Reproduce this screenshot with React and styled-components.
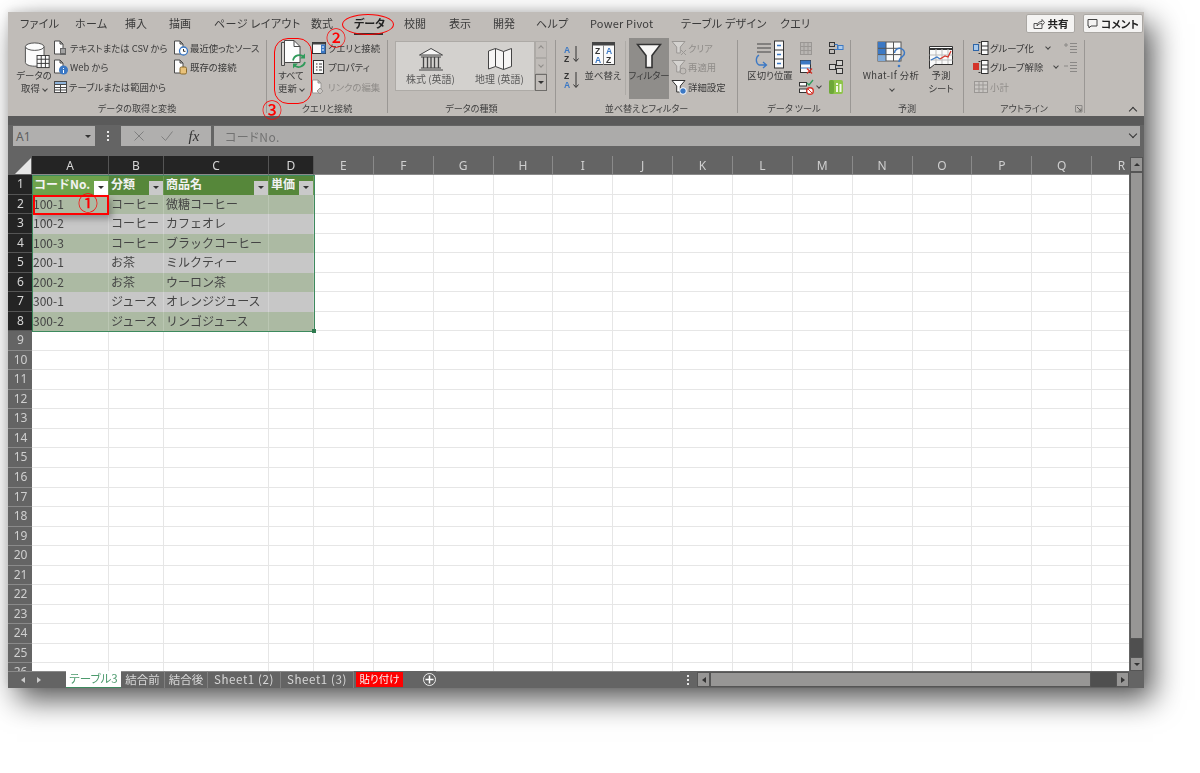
import React from "react";
import styled, { createGlobalStyle } from "styled-components";

const Global = createGlobalStyle`
  html, body { margin: 0; padding: 0; background: #fff; }
  #root { width: 1200px; height: 773px; overflow: hidden; }
  * { box-sizing: border-box; }
`;
const Page = styled.div`
  padding: 12px 0 0 8px;
  font-family: "Noto Sans CJK JP", "Noto Sans", sans-serif;
  font-feature-settings: "palt";
`;
const Win = styled.div`
  position: relative;
  width: 1136px;
  height: 676px;
  background: #c0bcb8;
  box-shadow: 9px 12px 28px rgba(0, 0, 0, 0.66), 0 -2px 8px rgba(0, 0, 0, 0.1);
  filter: blur(0.4px);
`;
const TabRow = styled.div`
  height: 23px;
  display: flex;
  align-items: center;
  padding-left: 12px;
  position: relative;
`;
const MenuTab = styled.div`
  width: ${(p) => p.$w}px;
  font-size: 11px;
  line-height: 23px;
  white-space: nowrap;
  color: ${(p) => (p.$on ? "#222" : "#3a3a3a")};
  font-weight: ${(p) => (p.$on ? 700 : 400)};
  letter-spacing: ${(p) => p.$ls || 0}px;
`;
const OnBar = styled.div`
  position: absolute;
  left: 346px;
  top: 21px;
  width: 29px;
  height: 2px;
  background: #333;
`;
const TabActions = styled.div`
  margin-left: auto;
  display: flex;
  gap: 8px;
  padding-right: 1px;
`;
const ActionBtn = styled.div`
  width: ${(p) => p.$w}px;
  height: 19px;
  background: #f4f3f2;
  border: 1px solid #aaa7a3;
  border-radius: 2px;
  display: flex;
  align-items: center;
  justify-content: center;
  gap: 3px;
  font-size: 10.5px;
  font-weight: 700;
  color: #222;
`;
const Ribbon = styled.div`
  height: 81px;
  display: flex;
  position: relative;
`;
const Group = styled.div`
  width: ${(p) => p.$w}px;
  display: flex;
  flex-direction: column;
`;
const GroupBody = styled.div`
  flex: 1;
  display: flex;
  padding: 3px 0 0 ${(p) => p.$pl || 0}px;
  min-height: 0;
`;
const GroupLabel = styled.div`
  height: 15px;
  font-size: 9.1px;
  line-height: 14px;
  text-align: center;
  color: #3f3f3f;
  white-space: nowrap;
`;
const Sep = styled.div`
  width: 1px;
  margin: 5px 0 3px;
  background: #9a9794;
`;
const Big = styled.div`
  width: ${(p) => p.$w}px;
  margin-left: ${(p) => p.$ml || 0}px;
  flex: none;
  display: flex;
  flex-direction: column;
  align-items: center;
  height: ${(p) => (p.$active ? "61px" : "auto")};
  background: ${(p) => (p.$active ? "#8f8d8a" : "transparent")};
`;
const BigIcon = styled.div`
  height: ${(p) => p.$h || 31}px;
  padding-left: ${(p) => p.$pl || 0}px;
  display: flex;
  align-items: flex-end;
  justify-content: center;
`;
const BigText = styled.div`
  font-size: 9.4px;
  line-height: 13px;
  color: #3a3a3a;
  white-space: nowrap;
  text-align: center;
  margin-top: ${(p) => p.$mt || 0}px;
  letter-spacing: ${(p) => p.$ls || 0}px;
`;
const SmallCol = styled.div`
  width: ${(p) => p.$w}px;
  margin-left: ${(p) => p.$ml || 0}px;
  flex: none;
  display: flex;
  flex-direction: column;
`;
const SmallItem = styled.div`
  height: ${(p) => p.$h || 19.5}px;
  padding-top: ${(p) => p.$pt || 0}px;
  display: flex;
  align-items: center;
  gap: 1px;
  font-size: 9.4px;
  color: ${(p) => (p.$off ? "#8f8c89" : "#3a3a3a")};
  white-space: nowrap;
`;
const Caret = styled.span`
  display: inline-block;
  margin-left: ${(p) => p.$ml || 3}px;
  width: 4px;
  height: 4px;
  border-right: 1px solid ${(p) => p.$c || "#444"};
  border-bottom: 1px solid ${(p) => p.$c || "#444"};
  transform: translateY(-1px) rotate(${(p) => (p.$up ? 225 : 45)}deg);
`;
const Gallery = styled.div`
  margin: 3px 0 0 7px;
  width: 152px;
  height: 50px;
  display: flex;
  flex: none;
`;
const GalleryPane = styled.div`
  width: 140px;
  background: #d3d1ce;
  border: 1px solid #adaaa6;
  display: flex;
`;
const GalleryItem = styled.div`
  width: 69px;
  display: flex;
  flex-direction: column;
  align-items: center;
  padding-top: 5px;
  font-size: 10px;
  color: #5a5a5a;
  white-space: nowrap;
`;
const GalleryScroll = styled.div`
  width: 12px;
  display: flex;
  flex-direction: column;
`;
const GalleryBtn = styled.div`
  flex: 1;
  border: 1px solid ${(p) => (p.$strong ? "#6f6d6a" : "#adaaa6")};
  display: flex;
  align-items: center;
  justify-content: center;
`;
const ThinSep = styled.div`
  width: 1px;
  height: 54px;
  margin: 3px 3px 0 ${(p) => p.$ml || 0}px;
  background: #adaaa6;
  flex: none;
`;
const Collapse = styled.div`
  position: absolute;
  left: 1122px;
  top: 73px;
  width: 6px;
  height: 6px;
  border-left: 1.3px solid #333;
  border-top: 1.3px solid #333;
  transform: rotate(45deg);
`;
const Launcher = styled.div`
  position: absolute;
  left: 1067px;
  top: 70px;
  line-height: 0;
`;
const FormulaArea = styled.div`
  height: 40px;
  background: linear-gradient(#5a5a5a 0 9px, #646464 9px);
  display: flex;
  padding: 10px 4px 0 5px;
`;
const NameBox = styled.div`
  width: 82px;
  height: 20px;
  background: #b0afae;
  display: flex;
  align-items: center;
  justify-content: space-between;
  padding: 0 4px 0 3px;
  font-size: 12px;
  color: #5f5f5f;
  font-family: "Noto Sans", sans-serif;
`;
const DownTri = styled.span`
  width: 0;
  height: 0;
  border-left: 3px solid transparent;
  border-right: 3px solid transparent;
  border-top: 3px solid #333;
  transform: rotate(${(p) => (p.$up ? 180 : 0)}deg);
`;
const Dots = styled.div`
  width: ${(p) => p.$w}px;
  height: ${(p) => p.$h || 20}px;
  display: flex;
  flex-direction: column;
  align-items: center;
  justify-content: center;
  gap: 2px;
  flex: none;
  i {
    width: 2px;
    height: 2px;
    background: #e8e8e8;
    display: block;
  }
`;
const FxBox = styled.div`
  width: 90px;
  height: 20px;
  background: #b0afae;
  display: flex;
  align-items: center;
  justify-content: space-around;
  padding: 0 4px;
  font-family: "Liberation Serif", serif;
  font-style: italic;
  font-size: 15px;
  color: #333;
  margin-right: 3px;
`;
const Input = styled.div`
  flex: 1;
  height: 20px;
  background: #acabaa;
  display: flex;
  align-items: center;
  justify-content: space-between;
  padding: 0 3px 0 11px;
  font-size: 12px;
  color: #727272;
  letter-spacing: 0.5px;
`;
const Chevron = styled.span`
  width: 6px;
  height: 6px;
  border-right: 1.4px solid #333;
  border-bottom: 1.4px solid #333;
  transform: translateY(-2px) rotate(45deg);
  margin-right: 1px;
`;
const Workspace = styled.div`
  height: 515px;
  display: flex;
`;
const SheetWrap = styled.div`
  position: relative;
  width: 1121px;
  overflow: hidden;
  background: #fff;
`;
const Sheet = styled.div`
  display: grid;
  grid-template-columns: 24px 77px 55px 105px 45px repeat(14, 59.87px);
  grid-auto-rows: 19.54px;
  grid-template-rows: 19px;
`;
const Corner = styled.div`
  background: #646464;
  position: relative;
  &::after {
    content: "";
    position: absolute;
    right: 1px;
    bottom: 1px;
    width: 0;
    height: 0;
    border-style: solid;
    border-width: 0 0 16px 16px;
    border-color: transparent transparent #e6e6e6 transparent;
  }
`;
const ColHead = styled.div`
  background: ${(p) => (p.$on ? "#242424" : "#646464")};
  color: ${(p) => (p.$on ? "#d6d6d6" : "#cfcfcf")};
  border-right: 1px solid ${(p) => (p.$on ? "#555" : "#8a8a8a")};
  border-bottom: 1px solid #8a8a8a;
  font-size: 12px;
  font-family: "Noto Sans", sans-serif;
  line-height: 19px;
  text-align: center;
`;
const RowHead = styled.div`
  background: ${(p) => (p.$on ? "#242424" : "#646464")};
  color: ${(p) => (p.$on ? "#d6d6d6" : "#cfcfcf")};
  border-bottom: 1px solid ${(p) => (p.$on ? "#555" : "#8a8a8a")};
  font-size: 12px;
  font-family: "Noto Sans", sans-serif;
  line-height: 18px;
  text-align: center;
  padding-left: 1px;
`;
const Cell = styled.div`
  border-right: 1px solid #e6e6e6;
  border-bottom: 1px solid #e6e6e6;
`;
const TCell = styled.div`
  background: ${(p) => (p.$band ? "#acbaa3" : "#c7c7c7")};
  border-right: 1px solid ${(p) => (p.$band ? "#bac6b2" : "#d3d3d3")};
  color: #444;
  font-size: 12px;
  line-height: 17px;
  padding-left: ${(p) => (p.$num ? 1 : 2)}px;
  white-space: nowrap;
  overflow: hidden;
  font-feature-settings: normal;
  font-family: "Noto Sans CJK JP", sans-serif;
`;
const THead = styled.div`
  position: relative;
  background: ${(p) => (p.$first ? "#6ea24b" : "#56873a")};
  border-right: 1px solid #6e9a55;
  color: #f2f2f2;
  font-size: 12px;
  font-weight: 700;
  line-height: 18px;
  padding-left: 2px;
  white-space: nowrap;
  font-feature-settings: normal;
`;
const FilterBtn = styled.div`
  position: absolute;
  right: 0;
  bottom: 0;
  width: 14px;
  height: 14px;
  background: ${(p) => (p.$first ? "#fff" : "#c9c9c9")};
  display: flex;
  align-items: center;
  justify-content: center;
`;
const TableEdge = styled.div`
  position: absolute;
  left: 24px;
  top: 19px;
  width: 283px;
  height: 157px;
  border: 1.3px solid #3d8a5e;
  pointer-events: none;
`;
const Handle = styled.div`
  position: absolute;
  right: -2px;
  bottom: -2px;
  width: 4px;
  height: 4px;
  background: #2f7a4f;
`;
const VScroll = styled.div`
  width: 15px;
  background: #646464;
  display: flex;
  flex-direction: column;
  padding: 1px 1px 0;
`;
const ScrollBtn = styled.div`
  height: ${(p) => p.$s}px;
  width: ${(p) => p.$w || "100%"};
  flex: none;
  background: #979695;
  border: 1px solid #555;
  display: flex;
  align-items: center;
  justify-content: center;
`;
const Thumb = styled.div`
  flex: none;
  height: 467px;
  background: #979695;
  border: 1px solid #555;
`;
const Track = styled.div`
  flex: 1;
  background: #4f4f4f;
`;
const Bottom = styled.div`
  height: 17px;
  background: #646464;
  display: flex;
  align-items: stretch;
`;
const Nav = styled.div`
  width: 58px;
  flex: none;
  display: flex;
  align-items: center;
  padding-left: 13px;
  gap: 12px;
  border-top: 1px solid #8a8a8a;
`;
const Tri = styled.span`
  width: 0;
  height: 0;
  border-top: 3px solid transparent;
  border-bottom: 3px solid transparent;
  ${(p) =>
    p.$left ? `border-right: 4px solid ${p.$c || "#ccc"};` : `border-left: 4px solid ${p.$c || "#ccc"};`}
`;
const SheetTab = styled.div`
  width: ${(p) => p.$w}px;
  flex: none;
  font-size: 11.5px;
  line-height: 15px;
  text-align: center;
  white-space: nowrap;
  color: #d8d8d8;
  letter-spacing: ${(p) => p.$ls || 0}px;
  border-top: 1px solid #8a8a8a;
  border-right: 1px solid #808080;
  ${(p) =>
    p.$on &&
    `background:#fff;color:#4c9a6d;border-top:none;border-right:none;border-bottom:1.5px solid #3d8a5e;`}
`;
const RedTab = styled.div`
  width: 47px;
  margin: 1px 0 1px 2px;
  flex: none;
  background: #fe0000;
  color: #f6f6f6;
  font-size: 10.5px;
  line-height: 14px;
  text-align: center;
`;
const AddBtn = styled.div`
  margin-left: 20px;
  width: 13px;
  height: 13px;
  margin-top: 2px;
  border-radius: 50%;
  border: 1.2px solid #ececec;
  color: #fff;
  flex: none;
  display: flex;
  align-items: center;
  justify-content: center;
`;
const HScroll = styled.div`
  width: 432px;
  margin-left: 1px;
  padding: 1px 0 1px;
  display: flex;
  flex: none;
`;
const HThumb = styled.div`
  width: 381px;
  background: #979695;
  border: 1px solid #555;
`;
const Spacer = styled.div`
  flex: 1;
  border-top: 1px solid #8a8a8a;
`;
const CornerBox = styled.div`
  width: 15px;
  flex: none;
`;
const Ring = styled.div`
  position: absolute;
  border: 1.8px solid #f00;
  left: ${(p) => p.$x}px;
  top: ${(p) => p.$y}px;
  width: ${(p) => p.$w}px;
  height: ${(p) => p.$h}px;
  border-radius: ${(p) => p.$r};
  pointer-events: none;
`;
const CellMark = styled(Ring)`
  border-width: 2px;
  box-shadow: 3px 4px 6px rgba(0, 0, 0, 0.28);
`;
const Num = styled.div`
  position: absolute;
  left: ${(p) => p.$x}px;
  top: ${(p) => p.$y}px;
  font-size: 20px;
  font-weight: 500;
  line-height: 20px;
  color: #f00;
  font-feature-settings: normal;
  font-family: "Noto Sans CJK JP", sans-serif;
`;

const S = { fill: "none", stroke: "#4a4a4a", strokeWidth: 1 };
const Doc = ({ off }) => (
  <path d="M1.5 1h5.5l3 3v10h-8.500z M7 1v3h3" fill="#fdfdfd" stroke={off ? "#9a9794" : "#4a4a4a"} />
);
const Sm = ({ children, w = 16 }) => (
  <svg width={w} height="16" viewBox={`0 0 ${w} 16`} style={{ flex: "none" }}>
    {children}
  </svg>
);
const IcoDb = () => (
  <svg width="29" height="27" viewBox="0 0 30 29">
    <path d="M2 5v17c0 2 4 4 10 4s10-2 10-4V5" fill="#fbfbfb" stroke="#4a4a4a" />
    <ellipse cx="12" cy="5" rx="10" ry="4" fill="#fbfbfb" stroke="#4a4a4a" />
    <rect x="14.500" y="14.500" width="13" height="13" fill="#fbfbfb" stroke="#333" />
    <path d="M14.500 18.500h13M14.500 23h13M19 14.500v13M23.500 14.500v13" {...S} stroke="#333" />
  </svg>
);
const IcoCsv = () => (
  <Sm>
    <Doc />
    <rect x="7" y="8" width="6" height="7" fill="#666" />
    <path d="M8 10h4M8 12h4" stroke="#ddd" />
  </Sm>
);
const IcoWeb = () => (
  <Sm>
    <Doc />
    <circle cx="10.500" cy="11" r="4.500" fill="#3b78c4" />
    <path d="M10.500 9v1M10.500 11v3" stroke="#fff" />
  </Sm>
);
const IcoTable = () => (
  <Sm w={15}>
    <rect x="1.500" y="2.500" width="12" height="11" fill="#fafafa" stroke="#4a4a4a" />
    <rect x="1.500" y="2.500" width="12" height="3" fill="#8fb3d9" stroke="#4a4a4a" />
    <path d="M1.500 8.500h12M1.500 11h12M7.500 5v9" {...S} />
  </Sm>
);
const IcoRecent = () => (
  <Sm>
    <Doc />
    <circle cx="10.500" cy="11" r="4" fill="#fff" stroke="#3b78c4" strokeWidth="1.300" />
    <path d="M10.500 9v2.300h2" stroke="#333" fill="none" />
  </Sm>
);
const IcoExist = () => (
  <Sm>
    <Doc />
    <rect x="7" y="8" width="6.500" height="7" rx="1.500" fill="#e9c27a" stroke="#8a6a2c" />
  </Sm>
);
const IcoRefresh = () => (
  <svg width="26" height="30" viewBox="0 0 26 30">
    <path d="M1.500 3.500h3v23h-3z" fill="#d9d6d3" stroke="#4a4a4a" />
    <path d="M4.500 1.500h9.500l6 6v16h-15.500z" fill="#fdfdfd" stroke="#4a4a4a" />
    <path d="M14 1.500v6h6" fill="none" stroke="#4a4a4a" />
    <path d="M13 21.500a6.500 6.500 0 0 1 11-3.500" fill="none" stroke="#2f9a5a" strokeWidth="1.700" />
    <path d="M25 14.500v5h-5z" fill="#2f9a5a" />
    <path d="M25 23a6.500 6.500 0 0 1-11 3" fill="none" stroke="#2f9a5a" strokeWidth="1.700" />
    <path d="M13 29.500v-5h5z" fill="#2f9a5a" />
  </svg>
);
const IcoQuery = () => (
  <Sm>
    <rect x="1.500" y="2.500" width="13" height="11" fill="#fafafa" stroke="#333" />
    <rect x="1.500" y="2.500" width="13" height="2" fill="#444" />
    <rect x="10" y="4.500" width="4.500" height="9" fill="#3b78c4" />
    <path d="M11 7h2M11 10h2" stroke="#fff" />
  </Sm>
);
const IcoProp = () => (
  <Sm>
    <rect x="2.500" y="1.500" width="10" height="13" fill="#fafafa" stroke="#333" />
    <path d="M5 5h1.500M5 8h1.500M5 11h1.500M8 5h3M8 8h3M8 11h3" stroke="#333" />
  </Sm>
);
const IcoLink = () => (
  <Sm>
    <Doc off />
    <path d="M6 12l3-3 3 3-3 3z" fill="#c9c6c3" stroke="#9a9794" />
  </Sm>
);
const IcoBank = () => (
  <svg width="26" height="24" viewBox="0 0 26 24">
    <path d="M13 1.500L24.500 8h-23z" fill="#f6f5f4" stroke="#444" />
    <path d="M3 10h20M3 21h20M1 23h24" stroke="#444" fill="none" />
    <path d="M5.500 10v11M9.500 10v11M13 10v11M16.500 10v11M20.500 10v11" stroke="#444" fill="none" strokeWidth="1.300" />
  </svg>
);
const IcoMap = () => (
  <svg width="26" height="24" viewBox="0 0 26 24">
    <path d="M1.500 4l7-2.500 8 3 8-3v18l-8 3-8-3-7 2.500z" fill="#f6f5f4" stroke="#444" />
    <path d="M8.500 1.500v18M16.500 4.500v18" stroke="#444" />
  </svg>
);
const IcoAZ = ({ up }) => (
  <svg width="18" height="18" viewBox="0 0 18 18">
    <text x="1" y="8" fontSize="8.500" fontWeight="700" fill={up ? "#3b78c4" : "#333"} fontFamily="Liberation Sans">
      {up ? "A" : "Z"}
    </text>
    <text x="1" y="16.500" fontSize="8.500" fontWeight="700" fill={up ? "#333" : "#3b78c4"} fontFamily="Liberation Sans">
      {up ? "Z" : "A"}
    </text>
    <path d="M13 1v15M10.500 13.500l2.500 3 2.500-3" fill="none" stroke="#333" />
  </svg>
);
const IcoSort = () => (
  <svg width="25" height="25" viewBox="0 0 25 25">
    <rect x="1.500" y="1.500" width="22" height="22" fill="#fafafa" stroke="#444" />
    <rect x="1.500" y="1.500" width="22" height="3" fill="#444" />
    <path d="M12.500 4v20" stroke="#888" />
    <g fontSize="8.500" fontWeight="700" fontFamily="Liberation Sans">
      <text x="4" y="13" fill="#333">Z</text>
      <text x="4" y="22" fill="#3b78c4">A</text>
      <text x="15" y="13" fill="#3b78c4">A</text>
      <text x="15" y="22" fill="#333">Z</text>
    </g>
  </svg>
);
const IcoFunnel = () => (
  <svg width="26" height="26" viewBox="0 0 26 26">
    <path d="M1.500 1.500h23l-8.500 11v12h-6v-12z" fill="#f7f6f5" stroke="#333" strokeWidth="1.600" />
  </svg>
);
const SmFunnel = ({ off, badge }) => (
  <Sm>
    <path
      d="M1 1.500h13l-4.700 5.500v6h-3.600v-6z"
      fill={off ? "#d4d2cf" : "#fdfdfd"}
      stroke={off ? "#9a9794" : "#333"}
    />
    {badge === "x" && <path d="M10 10l5 5M15 10l-5 5" stroke="#9a9794" />}
    {badge === "r" && <circle cx="12" cy="12" r="3" fill="none" stroke="#9a9794" />}
    {badge === "g" && <circle cx="12" cy="12" r="3.300" fill="#3b78c4" stroke="#fff" />}
  </Sm>
);
const IcoSplit = () => (
  <svg width="36" height="29" viewBox="0 0 36 29">
    <path d="M3 4h14M3 8h14M3 12h14" transform="translate(2 0)" stroke="#444" />
    <rect x="22.500" y="1" width="9" height="27" fill="#fafafa" stroke="#333" />
    <path d="M22.500 10h9M22.500 19h9" stroke="#333" />
    <path d="M25 5.500h4M25 14.500h4M25 23.500h4" stroke="#3b78c4" strokeWidth="1.300" />
    <path d="M7 15a6 6 0 0 0 0 10h7M11 22l3.500 3-3.500 3" fill="none" stroke="#3b78c4" strokeWidth="1.300" />
  </svg>
);
const IcoFlash = () => (
  <Sm>
    <rect x="2.500" y="2.500" width="11" height="12" fill="#b8b5b2" stroke="#9a9794" />
    <path d="M2.500 6.500h11M2.500 10.500h11M6 2.500v12M10 2.500v12" stroke="#9a9794" />
  </Sm>
);
const IcoDedupe = () => (
  <Sm>
    <rect x="2.500" y="1.500" width="10" height="12" fill="#fafafa" stroke="#333" />
    <rect x="2.500" y="1.500" width="10" height="4" fill="#3b78c4" />
    <path d="M2.500 9h10" stroke="#3b78c4" />
    <path d="M9 9.500l5 5M14 9.500l-5 5" stroke="#d4342a" strokeWidth="1.400" />
  </Sm>
);
const IcoValid = () => (
  <Sm>
    <rect x="1.500" y="3.500" width="7" height="3.500" fill="#fafafa" stroke="#333" />
    <rect x="1.500" y="10" width="7" height="3.500" fill="#fafafa" stroke="#333" />
    <path d="M9 4l2 2 4-5" fill="none" stroke="#2f9a5a" strokeWidth="1.300" />
    <circle cx="12" cy="12" r="3.300" fill="#fff" stroke="#d4342a" strokeWidth="1.400" />
    <path d="M10 10l4 4" stroke="#d4342a" />
  </Sm>
);
const IcoCons = () => (
  <Sm>
    <rect x="1.500" y="2.500" width="5" height="4" fill="none" stroke="#333" />
    <rect x="1.500" y="9.500" width="5" height="4" fill="none" stroke="#333" />
    <path d="M6.500 4.500h3v5h-3M9.500 7.500h1" stroke="#3b78c4" fill="none" />
    <rect x="10" y="5.500" width="5" height="4" fill="#aecbe9" stroke="#3b78c4" />
  </Sm>
);
const IcoRel = () => (
  <Sm>
    <rect x="8.500" y="1.500" width="6" height="5" fill="#d4d2cf" stroke="#333" />
    <rect x="8.500" y="9.500" width="6" height="5" fill="#d4d2cf" stroke="#333" />
    <rect x="1.500" y="5.500" width="6" height="5" fill="#d4d2cf" stroke="#333" />
  </Sm>
);
const IcoModel = () => (
  <Sm>
    <rect x="1" y="1" width="14" height="14" rx="2" fill="#8ec44a" />
    <rect x="1" y="1" width="5" height="14" rx="2" fill="#6ea838" />
    <path d="M8 7h2v6H8zM11.500 5h2v8h-2zM8 4h2v2H8z" fill="#f2f7e8" />
  </Sm>
);
const IcoWhatIf = () => (
  <svg width="29" height="28" viewBox="0 0 29 28">
    <rect x="1" y="1" width="23" height="19" fill="#fafafa" stroke="#555" />
    <rect x="1" y="1" width="8" height="12.500" fill="#3b78c4" />
    <rect x="1" y="13.500" width="8" height="6.500" fill="#7fa9d8" />
    <path d="M1 7.300h23M1 13.600h23M9 1v19M16.500 1v19" stroke="#555" fill="none" />
    <path d="M17.500 12a5 4.500 0 1 1 8 3.500c-2 1.500-3.500 2.500-3.500 5.500" fill="none" stroke="#3b78c4" strokeWidth="1.500" />
    <circle cx="22" cy="25" r="1.300" fill="#3b78c4" />
  </svg>
);
const IcoForecast = () => (
  <svg width="26" height="24" viewBox="0 0 26 24">
    <path d="M1.500 1.500h23v18h-18l-5 4z" fill="#fafafa" stroke="#333" />
    <path d="M1.500 4h23" stroke="#333" strokeWidth="2" />
    <path d="M1.500 10h23M1.500 15h23M8 4v15M14 4v15M20 4v15" stroke="#bbb" fill="none" />
    <path d="M3 15l6-3 3 2" fill="none" stroke="#3b78c4" strokeWidth="1.300" />
    <path d="M12 14l5-3 3 1 3-6" fill="none" stroke="#d4342a" strokeWidth="1.300" />
  </svg>
);
const IcoGroup = ({ red }) => (
  <Sm>
    <rect x="0.500" y="4.500" width="5" height="6" fill={red ? "#d4342a" : "#a9c9ea"} stroke={red ? "#d4342a" : "#2f66a8"} />
    <rect x="8.500" y="1.500" width="6.500" height="13" fill="#fafafa" stroke="#333" />
    <path d="M8.500 6h6.500M8.500 10h6.500M5.500 2.500h2M5.500 13.500h2" stroke="#333" />
  </Sm>
);
const IcoSub = () => (
  <Sm>
    <rect x="1.500" y="2.500" width="13" height="11" fill="#c9c6c3" stroke="#9a9794" />
    <path d="M1.500 6h13M1.500 10h13M6 2.500v11M10 2.500v11" stroke="#9a9794" />
  </Sm>
);
const IcoOutline = ({ plus }) => (
  <Sm>
    <path d="M7 3.500h7M7 6.500h7M7 9.500h7M7 12.500h7" stroke="#8a8886" />
    <path d={plus ? "M1 5h4M3 3v4" : "M1 7h4"} stroke="#8a8886" />
  </Sm>
);

const tabs = [
  ["ファイル", 55, 0.3],
  ["ホーム", 50, 0.4],
  ["挿入", 44],
  ["描画", 45],
  ["ページ レイアウト", 97, 0.4],
  ["数式", 43],
  ["データ", 50, 0, true],
  ["校閲", 45],
  ["表示", 44],
  ["開発", 43],
  ["ヘルプ", 54, 0.3],
  ["Power Pivot", 91, 0.2],
  ["テーブル デザイン", 99, 0.3],
  ["クエリ", 30, 0.3],
];
const cols = ["A", "B", "C", "D", "E", "F", "G", "H", "I", "J", "K", "L", "M", "N", "O", "P", "Q", "R"];
const head = ["コードNo.", "分類", "商品名", "単価"];
const data = [
  ["100-1", "コーヒー", "微糖コーヒー"],
  ["100-2", "コーヒー", "カフェオレ"],
  ["100-3", "コーヒー", "ブラックコーヒー"],
  ["200-1", "お茶", "ミルクティー"],
  ["200-2", "お茶", "ウーロン茶"],
  ["300-1", "ジュース", "オレンジジュース"],
  ["300-2", "ジュース", "リンゴジュース"],
];

function Grid() {
  const cells = [<Corner key="c" />];
  cols.forEach((c, i) => cells.push(<ColHead key={c} $on={i < 4}>{c}</ColHead>));
  for (let r = 1; r <= 26; r++) {
    cells.push(<RowHead key={"r" + r} $on={r <= 8}>{r}</RowHead>);
    cols.forEach((c, i) => {
      const k = c + r;
      if (r === 1 && i < 4)
        cells.push(
          <THead key={k} $first={i === 0}>
            {head[i]}
            <FilterBtn $first={i === 0}><DownTri /></FilterBtn>
          </THead>
        );
      else if (r > 1 && r <= 8 && i < 4)
        cells.push(
          <TCell key={k} $band={r % 2 === 0} $num={i === 0}>
            {data[r - 2][i] || ""}
          </TCell>
        );
      else cells.push(<Cell key={k} />);
    });
  }
  return <Sheet>{cells}</Sheet>;
}

export default function App() {
  return (
    <Page>
      <Global />
      <Win>
        <TabRow>
          {tabs.map(([t, w, ls, on]) => (
            <MenuTab key={t} $w={w} $ls={ls} $on={on}>{t}</MenuTab>
          ))}
          <OnBar />
          <TabActions>
            <ActionBtn $w={49}>
              <svg width="12" height="12" viewBox="0 0 12 12">
                <path d="M1 5.500h3M1 5.500v5h8v-3M4 8c0-3 2-4.500 5-4.500V1.500l2.500 3-2.500 3V5.500c-2 0-4 .500-5 2.500z" fill="none" stroke="#444" strokeWidth="0.900" />
              </svg>
              共有
            </ActionBtn>
            <ActionBtn $w={60}>
              <svg width="11" height="11" viewBox="0 0 11 11">
                <path d="M1 1.500h9v6.500H4l-2 2V8H1z" fill="none" stroke="#444" />
              </svg>
              コメント
            </ActionBtn>
          </TabActions>
        </TabRow>
        <Ribbon>
          <Group $w={258}>
            <GroupBody $pl={7}>
              <Big $w={38}>
                <BigIcon $pl={6}><IcoDb /></BigIcon>
                <BigText>データの</BigText>
                <BigText>取得<Caret /></BigText>
              </Big>
              <SmallCol $w={120} $ml={0}>
                <SmallItem><IcoCsv />テキストまたは CSV から</SmallItem>
                <SmallItem><IcoWeb />Web から</SmallItem>
                <SmallItem><IcoTable />テーブルまたは範囲から</SmallItem>
              </SmallCol>
              <SmallCol $w={90}>
                <SmallItem><IcoRecent />最近使ったソース</SmallItem>
                <SmallItem><IcoExist />既存の接続</SmallItem>
              </SmallCol>
            </GroupBody>
            <GroupLabel>データの取得と変換</GroupLabel>
          </Group>
          <Sep />
          <Group $w={120}>
            <GroupBody $pl={6}>
              <Big $w={36}>
                <BigIcon $pl={4}><IcoRefresh /></BigIcon>
                <BigText>すべて</BigText>
                <BigText>更新<Caret /></BigText>
              </Big>
              <SmallCol $w={76} $ml={2}>
                <SmallItem><IcoQuery />クエリと接続</SmallItem>
                <SmallItem><IcoProp />プロパティ</SmallItem>
                <SmallItem $off><IcoLink />リンクの編集</SmallItem>
              </SmallCol>
            </GroupBody>
            <GroupLabel>クエリと接続</GroupLabel>
          </Group>
          <Sep />
          <Group $w={167}>
            <GroupBody>
              <Gallery>
                <GalleryPane>
                  <GalleryItem><IcoBank />株式 (英語)</GalleryItem>
                  <GalleryItem><IcoMap />地理 (英語)</GalleryItem>
                </GalleryPane>
                <GalleryScroll>
                  <GalleryBtn><Caret $ml={0.01} $up $c="#8f8c89" /></GalleryBtn>
                  <GalleryBtn><Caret $ml={0.01} $c="#8f8c89" /></GalleryBtn>
                  <GalleryBtn $strong><DownTri /></GalleryBtn>
                </GalleryScroll>
              </Gallery>
            </GroupBody>
            <GroupLabel>データの種類</GroupLabel>
          </Group>
          <Sep />
          <Group $w={181}>
            <GroupBody $pl={7}>
              <SmallCol $w={18}>
                <SmallItem $h={26} $pt={6}><IcoAZ up /></SmallItem>
                <SmallItem $h={26} $pt={6}><IcoAZ /></SmallItem>
              </SmallCol>
              <Big $w={44} $ml={0}>
                <BigIcon $h={28} $pl={0}><IcoSort /></BigIcon>
                <BigText $mt={3}>並べ替え</BigText>
              </Big>
              <ThinSep $ml={0} />
              <Big $w={40} $active>
                <BigIcon><IcoFunnel /></BigIcon>
                <BigText>フィルター</BigText>
              </Big>
              <SmallCol $w={62} $ml={2}>
                <SmallItem $off><SmFunnel off badge="x" />クリア</SmallItem>
                <SmallItem $off><SmFunnel off badge="r" />再適用</SmallItem>
                <SmallItem><SmFunnel badge="g" />詳細設定</SmallItem>
              </SmallCol>
            </GroupBody>
            <GroupLabel>並べ替えとフィルター</GroupLabel>
          </Group>
          <Sep />
          <Group $w={112}>
            <GroupBody $pl={8}>
              <Big $w={48}>
                <BigIcon><IcoSplit /></BigIcon>
                <BigText>区切り位置</BigText>
              </Big>
              <SmallCol $w={30} $ml={4}>
                <SmallItem><IcoFlash /></SmallItem>
                <SmallItem><IcoDedupe /></SmallItem>
                <SmallItem><IcoValid /><Caret $ml={2} /></SmallItem>
              </SmallCol>
              <SmallCol $w={18} $ml={0}>
                <SmallItem><IcoCons /></SmallItem>
                <SmallItem><IcoRel /></SmallItem>
                <SmallItem><IcoModel /></SmallItem>
              </SmallCol>
            </GroupBody>
            <GroupLabel>データ ツール</GroupLabel>
          </Group>
          <Sep />
          <Group $w={112}>
            <GroupBody $pl={8}>
              <Big $w={64}>
                <BigIcon><IcoWhatIf /></BigIcon>
                <BigText $ls={0.45}>What-If 分析</BigText>
                <BigText><Caret $ml={1} /></BigText>
              </Big>
              <Big $w={30} $ml={3}>
                <BigIcon><IcoForecast /></BigIcon>
                <BigText>予測</BigText>
                <BigText>シート</BigText>
              </Big>
            </GroupBody>
            <GroupLabel>予測</GroupLabel>
          </Group>
          <Sep />
          <Group $w={120}>
            <GroupBody $pl={9}>
              <SmallCol $w={90}>
                <SmallItem><IcoGroup />グループ化<Caret $ml={11} /></SmallItem>
                <SmallItem><IcoGroup red />グループ解除<Caret $ml={10} /></SmallItem>
                <SmallItem $off><IcoSub />小計</SmallItem>
              </SmallCol>
              <SmallCol $w={16}>
                <SmallItem><IcoOutline plus /></SmallItem>
                <SmallItem><IcoOutline /></SmallItem>
              </SmallCol>
            </GroupBody>
            <GroupLabel>アウトライン</GroupLabel>
          </Group>
          <Sep />
          <Launcher>
            <svg width="8" height="8" viewBox="0 0 8 8">
              <path d="M.5 .500h6.500v6.500h-6.500z" fill="none" stroke="#8a8886" />
              <path d="M2 2l4 4M6 3.500V6H3.500" fill="none" stroke="#6a6866" />
            </svg>
          </Launcher>
          <Collapse />
        </Ribbon>
        <FormulaArea>
          <NameBox>A1<DownTri /></NameBox>
          <Dots $w={26}><i /><i /><i /></Dots>
          <FxBox>
            <svg width="12" height="12" viewBox="0 0 12 12"><path d="M1.500 1.500l9 9M10.500 1.500l-9 9" stroke="#7f7f7f" /></svg>
            <svg width="14" height="12" viewBox="0 0 14 12"><path d="M1.500 6.500l4 4 7-9" fill="none" stroke="#7f7f7f" /></svg>
            <span>fx</span>
          </FxBox>
          <Input>コードNo.<Chevron /></Input>
        </FormulaArea>
        <Workspace>
          <SheetWrap>
            <Grid />
            <TableEdge><Handle /></TableEdge>
          </SheetWrap>
          <VScroll>
            <ScrollBtn $s={15}><DownTri $up /></ScrollBtn>
            <Thumb />
            <Track />
            <ScrollBtn $s={14}><DownTri /></ScrollBtn>
          </VScroll>
        </Workspace>
        <Bottom>
          <Nav><Tri $left /><Tri /></Nav>
          <SheetTab $w={55} $on>テーブル3</SheetTab>
          <SheetTab $w={44}>結合前</SheetTab>
          <SheetTab $w={43}>結合後</SheetTab>
          <SheetTab $w={73} $ls={0.6}>Sheet1 (2)</SheetTab>
          <SheetTab $w={73} $ls={0.6}>Sheet1 (3)</SheetTab>
          <RedTab>貼り付け</RedTab>
          <AddBtn>
            <svg width="9" height="9" viewBox="0 0 9 9"><path d="M4.500 .500v8M.500 4.500h8" stroke="#fff" strokeWidth="1.500" /></svg>
          </AddBtn>
          <Spacer />
          <Dots $w={16} $h={17}><i /><i /><i /></Dots>
          <HScroll>
            <ScrollBtn $s={15} $w="13px"><Tri $left $c="#333" /></ScrollBtn>
            <HThumb />
            <Track />
            <ScrollBtn $s={15} $w="13px"><Tri $c="#333" /></ScrollBtn>
          </HScroll>
          <CornerBox />
        </Bottom>
        <Ring $x={334} $y={2} $w={52} $h={21} $r="50%" />
        <Ring $x={266} $y={26} $w={38} $h={66} $r="14px" />
        <CellMark $x={25} $y={183} $w={76} $h={20} $r="0" />
        <Num $x={318} $y={16}>②</Num>
        <Num $x={254} $y={88}>③</Num>
        <Num $x={70} $y={181}>①</Num>
      </Win>
    </Page>
  );
}
